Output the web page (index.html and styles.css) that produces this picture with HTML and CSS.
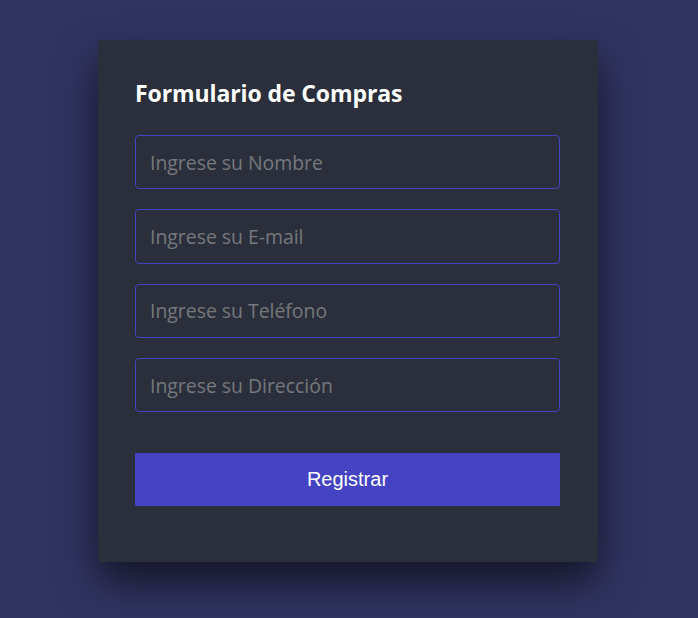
FILE: index.html
```html
<!DOCTYPE html>
<html lang="es">
<head>
<meta charset="utf-8">
<title>Formulario de Compras</title>
<link rel="stylesheet" href="styles.css">
</head>
<body>
<form class="card">
  <h1 class="title">Formulario de Compras</h1>
  <input class="field" type="text" placeholder="Ingrese su Nombre">
  <input class="field" type="text" placeholder="Ingrese su E-mail">
  <input class="field" type="text" placeholder="Ingrese su Teléfono">
  <input class="field" type="text" placeholder="Ingrese su Dirección">
  <button class="btn" type="button">Registrar</button>
</form>
</body>
</html>
```
FILE: styles.css
```css
html, body {
  margin: 0;
  padding: 0;
}
body {
  background: #313461;
  min-height: 618px;
  display: flex;
  justify-content: center;
  align-items: flex-start;
  font-family: "Open Sans", "Noto Sans", sans-serif;
}
.card {
  box-sizing: border-box;
  width: 500px;
  height: 522px;
  margin-top: 40px;
  margin-left: -2px;
  background: #2a2f3b;
  border-radius: 4px;
  box-shadow: 0 20px 40px rgba(0, 0, 0, 0.6);
  padding: 44px 38px 0 37px;
  display: flex;
  flex-direction: column;
}
.title {
  margin: 0 0 32px;
  color: #ffffff;
  font-size: 23px;
  font-weight: 700;
  line-height: 19px;
  height: 19px;
  letter-spacing: -0.1px;
}
.field {
  box-sizing: border-box;
  width: 425px;
  height: 54.33px;
  flex: none;
  margin: 0 0 20px;
  padding: 0 14px;
  background: #2a2f3b;
  border: 1px solid #4343c4;
  border-radius: 4px;
  color: #d0d0d0;
  font-family: "Open Sans", "Noto Sans", sans-serif;
  font-size: 19.4px;
  outline: none;
}
.field::placeholder {
  color: #76787c;
}
.btn {
  width: 425px;
  height: 53px;
  flex: none;
  margin-top: 20.7px;
  border: none;
  background: #4343c4;
  color: #ffffff;
  font-family: "Liberation Sans", Arial, sans-serif;
  font-size: 20px;
  cursor: pointer;
}
```
